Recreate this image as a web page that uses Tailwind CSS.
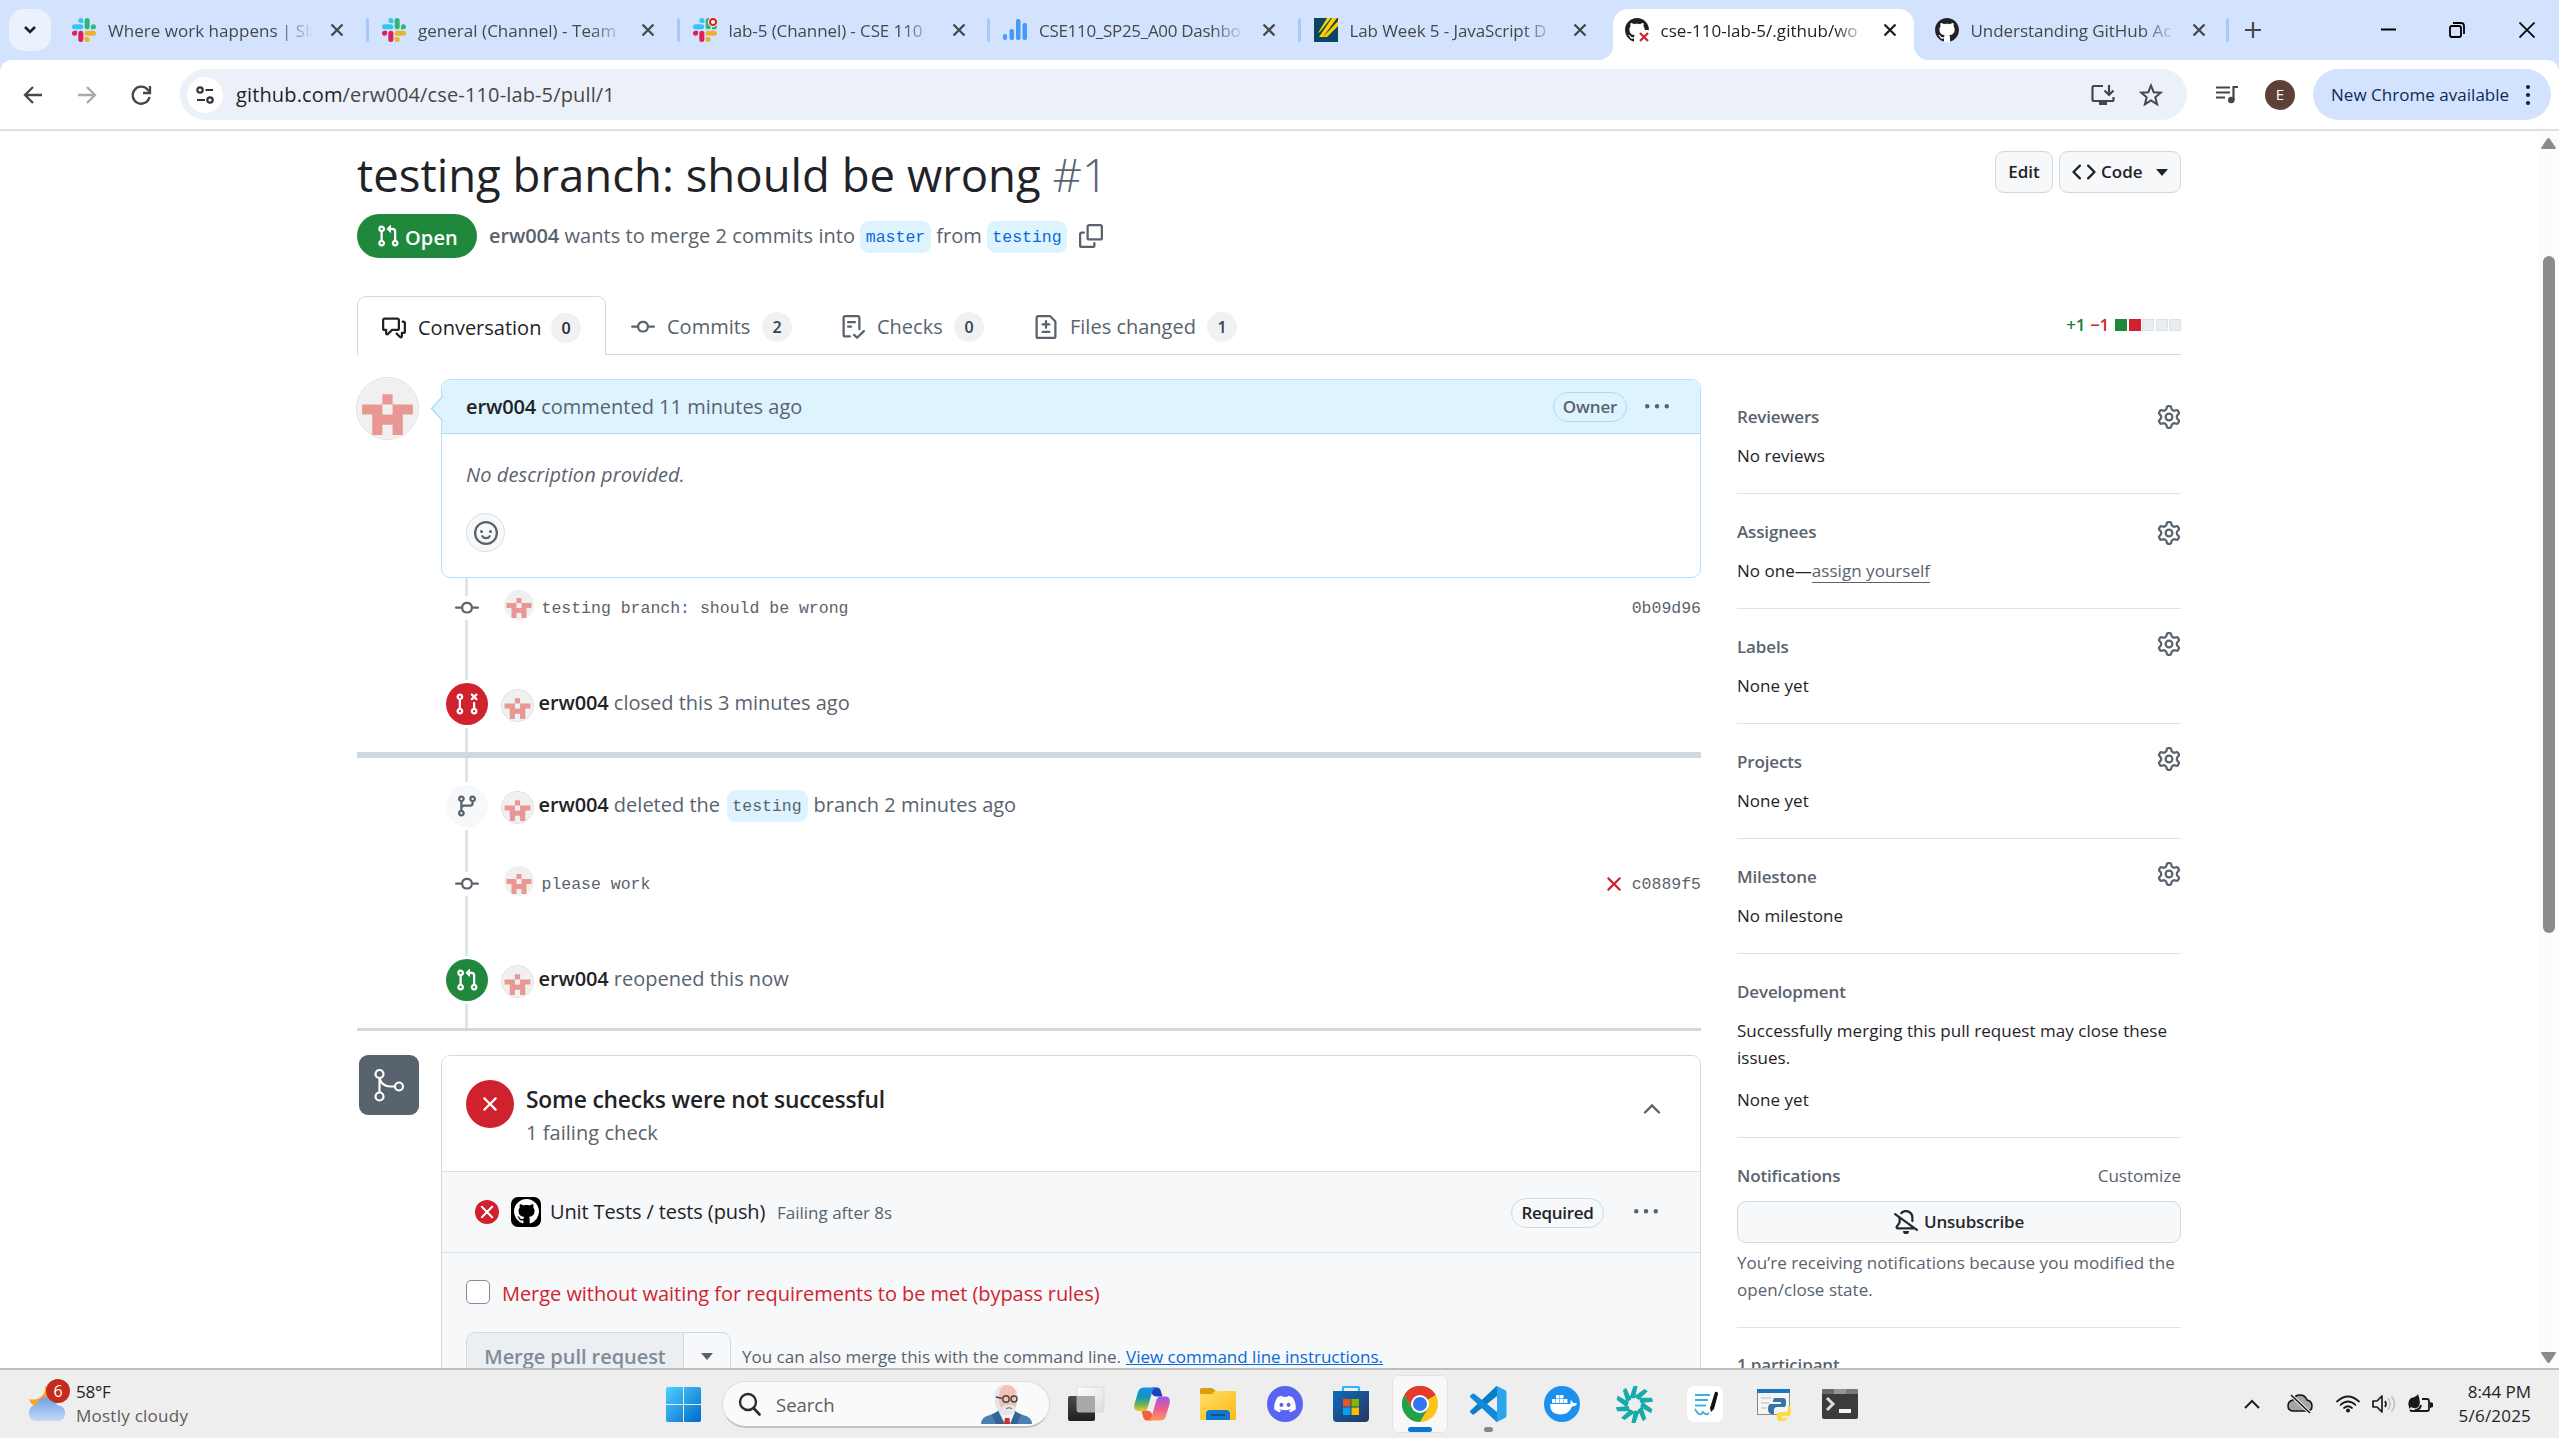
<!DOCTYPE html>
<html lang="en">
<head>
<meta charset="utf-8">
<title>testing branch: should be wrong #1</title>
<script src="https://cdn.jsdelivr.net/npm/@tailwindcss/browser@4"></script>
</head>
<body class="w-[2559px] h-[1438px] overflow-hidden bg-[#d3e3fd] font-['Open_Sans','Noto_Sans',sans-serif] text-[#1f2328] flex flex-col">

<svg class="hidden">
  <symbol id="slack" viewBox="0 0 24 24">
    <path fill="#E01E5A" d="M5.042 15.165a2.528 2.528 0 0 1-2.52 2.523A2.528 2.528 0 0 1 0 15.165a2.527 2.527 0 0 1 2.522-2.52h2.52v2.52zM6.313 15.165a2.527 2.527 0 0 1 2.521-2.52 2.527 2.527 0 0 1 2.521 2.52v6.313A2.528 2.528 0 0 1 8.834 24a2.528 2.528 0 0 1-2.521-2.522v-6.313z"/>
    <path fill="#36C5F0" d="M8.834 5.042a2.528 2.528 0 0 1-2.521-2.52A2.528 2.528 0 0 1 8.834 0a2.528 2.528 0 0 1 2.521 2.522v2.52H8.834zM8.834 6.313a2.528 2.528 0 0 1 2.521 2.521 2.528 2.528 0 0 1-2.521 2.521H2.522A2.528 2.528 0 0 1 0 8.834a2.528 2.528 0 0 1 2.522-2.521h6.312z"/>
    <path fill="#2EB67D" d="M18.956 8.834a2.528 2.528 0 0 1 2.522-2.521A2.528 2.528 0 0 1 24 8.834a2.528 2.528 0 0 1-2.522 2.521h-2.522V8.834zM17.688 8.834a2.528 2.528 0 0 1-2.523 2.521 2.527 2.527 0 0 1-2.52-2.521V2.522A2.527 2.527 0 0 1 15.165 0a2.528 2.528 0 0 1 2.523 2.522v6.312z"/>
    <path fill="#ECB22E" d="M15.165 18.956a2.528 2.528 0 0 1 2.523 2.522A2.528 2.528 0 0 1 15.165 24a2.527 2.527 0 0 1-2.52-2.522v-2.522h2.52zM15.165 17.688a2.527 2.527 0 0 1-2.52-2.523 2.526 2.526 0 0 1 2.52-2.52h6.313A2.527 2.527 0 0 1 24 15.165a2.528 2.528 0 0 1-2.522 2.523h-6.313z"/>
  </symbol>
  <symbol id="close" viewBox="0 0 16 16"><path d="M2.500 2.500l11 11M13.500 2.500l-11 11" stroke="currentColor" stroke-width="2.300" fill="none"/></symbol>
  <symbol id="github" viewBox="0 0 16 16"><path fill="currentColor" d="M8 0c4.42 0 8 3.58 8 8a8.013 8.013 0 0 1-5.45 7.59c-.4.08-.55-.17-.55-.38 0-.27.01-1.13.01-2.2 0-.75-.25-1.23-.54-1.48 1.78-.2 3.65-.88 3.65-3.95 0-.88-.31-1.59-.82-2.15.08-.2.36-1.02-.08-2.12 0 0-.67-.22-2.2.82-.64-.18-1.32-.27-2-.27-.68 0-1.36.09-2 .27-1.53-1.03-2.2-.82-2.2-.82-.44 1.1-.16 1.92-.08 2.12-.51.56-.82 1.28-.82 2.15 0 3.06 1.86 3.75 3.64 3.95-.23.2-.44.55-.51 1.07-.46.21-1.61.55-2.33-.66-.15-.24-.6-.83-1.23-.82-.67.01-.27.38.01.53.34.19.73.9.82 1.13.16.45.68 1.31 2.69.94 0 .67.01 1.3.01 1.49 0 .21-.15.45-.55.38A7.995 7.995 0 0 1 0 8c0-4.42 3.58-8 8-8Z"/></symbol>
  <symbol id="pr" viewBox="0 0 16 16"><path fill="currentColor" d="M1.5 3.25a2.25 2.25 0 1 1 3 2.122v5.256a2.251 2.251 0 1 1-1.5 0V5.372A2.25 2.25 0 0 1 1.5 3.25Zm5.677-.177L9.573.677A.25.25 0 0 1 10 .854V2.5h1A2.5 2.5 0 0 1 13.5 5v5.628a2.251 2.251 0 1 1-1.5 0V5a1 1 0 0 0-1-1h-1v1.646a.25.25 0 0 1-.427.177L7.177 3.427a.25.25 0 0 1 0-.354ZM3.75 2.5a.75.75 0 1 0 0 1.5.75.75 0 0 0 0-1.5Zm0 9.5a.75.75 0 1 0 0 1.5.75.75 0 0 0 0-1.5Zm8.25.75a.75.75 0 1 0 1.5 0 .75.75 0 0 0-1.5 0Z"/></symbol>
  <symbol id="pr-closed" viewBox="0 0 16 16"><path fill="currentColor" d="M3.25 1A2.25 2.25 0 0 1 4 5.372v5.256a2.251 2.251 0 1 1-1.5 0V5.372A2.251 2.251 0 0 1 3.25 1Zm9.5 5.5a.75.75 0 0 1 .75.75v3.378a2.251 2.251 0 1 1-1.5 0V7.25a.75.75 0 0 1 .75-.75Zm-2.03-5.273a.75.75 0 0 1 1.06 0l.97.97.97-.97a.748.748 0 0 1 1.265.332.75.75 0 0 1-.205.729l-.97.97.97.97a.751.751 0 0 1-.018 1.042.751.751 0 0 1-1.042.018l-.97-.97-.97.97a.749.749 0 0 1-1.275-.326.749.749 0 0 1 .215-.734l.97-.97-.97-.97a.75.75 0 0 1 0-1.06ZM2.5 3.25a.75.75 0 1 0 1.5 0 .75.75 0 0 0-1.5 0ZM3.25 12a.75.75 0 1 0 0 1.5.75.75 0 0 0 0-1.5Zm9.5 0a.75.75 0 1 0 0 1.5.75.75 0 0 0 0-1.5Z"/></symbol>
  <symbol id="branch" viewBox="0 0 16 16"><path fill="currentColor" d="M9.5 3.25a2.25 2.25 0 1 1 3 2.122V6A2.5 2.5 0 0 1 10 8.5H6a1 1 0 0 0-1 1v1.128a2.251 2.251 0 1 1-1.5 0V5.372a2.25 2.25 0 1 1 1.5 0v1.836A2.493 2.493 0 0 1 6 7h4a1 1 0 0 0 1-1v-.628A2.25 2.25 0 0 1 9.5 3.25Zm-6 0a.75.75 0 1 0 1.5 0 .75.75 0 0 0-1.5 0Zm8.25-.75a.75.75 0 1 0 0 1.5.75.75 0 0 0 0-1.5ZM4.25 12a.75.75 0 1 0 0 1.5.75.75 0 0 0 0-1.5Z"/></symbol>
  <symbol id="commit" viewBox="0 0 16 16"><path fill="currentColor" d="M11.93 8.5a4.002 4.002 0 0 1-7.86 0H.75a.75.75 0 0 1 0-1.5h3.32a4.002 4.002 0 0 1 7.86 0h3.32a.75.75 0 0 1 0 1.5Zm-1.43-.75a2.5 2.5 0 1 0-5 0 2.5 2.5 0 0 0 5 0Z"/></symbol>
  <symbol id="copy" viewBox="0 0 16 16"><path fill="currentColor" d="M0 6.75C0 5.784.784 5 1.75 5h1.5a.75.75 0 0 1 0 1.5h-1.5a.25.25 0 0 0-.25.25v7.5c0 .138.112.25.25.25h7.5a.25.25 0 0 0 .25-.25v-1.5a.75.75 0 0 1 1.5 0v1.5A1.75 1.75 0 0 1 9.25 16h-7.5A1.75 1.75 0 0 1 0 14.25Z"/><path fill="currentColor" d="M5 1.75C5 .784 5.784 0 6.75 0h7.5C15.216 0 16 .784 16 1.75v7.5A1.75 1.75 0 0 1 14.25 11h-7.5A1.75 1.75 0 0 1 5 9.25Zm1.75-.25a.25.25 0 0 0-.25.25v7.5c0 .138.112.25.25.25h7.5a.25.25 0 0 0 .25-.25v-7.5a.25.25 0 0 0-.25-.25Z"/></symbol>
  <symbol id="discussion" viewBox="0 0 16 16"><path fill="currentColor" d="M1.75 1h8.5c.966 0 1.75.784 1.75 1.75v5.5A1.75 1.75 0 0 1 10.25 10H7.061l-2.574 2.573A1.458 1.458 0 0 1 2 11.543V10h-.25A1.75 1.75 0 0 1 0 8.25v-5.5C0 1.784.784 1 1.75 1ZM1.5 2.75v5.5c0 .138.112.25.25.25h1a.75.75 0 0 1 .75.75v2.19l2.72-2.72a.749.749 0 0 1 .53-.22h3.5a.25.25 0 0 0 .25-.25v-5.5a.25.25 0 0 0-.25-.25h-8.5a.25.25 0 0 0-.25.25Zm13 2a.25.25 0 0 0-.25-.25h-.5a.75.75 0 0 1 0-1.5h.5c.966 0 1.75.784 1.75 1.75v5.5A1.75 1.75 0 0 1 14.25 12H14v1.543a1.458 1.458 0 0 1-2.487 1.03L9.22 12.28a.749.749 0 0 1 .326-1.275.749.749 0 0 1 .734.215l2.22 2.22v-2.19a.75.75 0 0 1 .75-.75h1a.25.25 0 0 0 .25-.25Z"/></symbol>
  <symbol id="checklist" viewBox="0 0 16 16"><path fill="currentColor" d="M2.5 1.75v11.5c0 .138.112.25.25.25h3.17a.75.75 0 0 1 0 1.5H2.75A1.75 1.75 0 0 1 1 13.25V1.75C1 .784 1.784 0 2.75 0h8.5C12.216 0 13 .784 13 1.75v7.736a.75.75 0 0 1-1.5 0V1.75a.25.25 0 0 0-.25-.25h-8.5a.25.25 0 0 0-.25.25Zm13.274 9.537v-.001l-4.557 4.45a.75.75 0 0 1-1.055-.008l-1.943-1.95a.75.75 0 0 1 1.062-1.058l1.419 1.425 4.026-3.932a.75.75 0 1 1 1.048 1.074ZM4.75 4h4.5a.75.75 0 0 1 0 1.5h-4.5a.75.75 0 0 1 0-1.5ZM4 7.75A.75.75 0 0 1 4.75 7h2a.75.75 0 0 1 0 1.5h-2A.75.75 0 0 1 4 7.75Z"/></symbol>
  <symbol id="filediff" viewBox="0 0 16 16"><path fill="currentColor" d="M1 1.75C1 .784 1.784 0 2.75 0h7.586c.464 0 .909.184 1.237.513l2.914 2.914c.329.328.513.773.513 1.237v9.586A1.75 1.75 0 0 1 13.25 16H2.75A1.75 1.75 0 0 1 1 14.25Zm1.75-.25a.25.25 0 0 0-.25.25v12.5c0 .138.112.25.25.25h10.5a.25.25 0 0 0 .25-.25V4.664a.25.25 0 0 0-.073-.177l-2.914-2.914a.25.25 0 0 0-.177-.073ZM8 3.25a.75.75 0 0 1 .75.75v1.5h1.5a.75.75 0 0 1 0 1.5h-1.5v1.5a.75.75 0 0 1-1.5 0V7h-1.5a.75.75 0 0 1 0-1.5h1.5V4A.75.75 0 0 1 8 3.25Zm-3 8a.75.75 0 0 1 .75-.75h4.5a.75.75 0 0 1 0 1.5h-4.5a.75.75 0 0 1-.75-.75Z"/></symbol>
  <symbol id="gear" viewBox="0 0 16 16"><path fill="currentColor" d="M8 0a8.2 8.2 0 0 1 .701.031C9.444.095 9.99.645 10.16 1.29l.288 1.107c.018.066.079.158.212.224.231.114.454.243.668.386.123.082.233.09.299.071l1.103-.303c.644-.176 1.392.021 1.82.63.27.385.506.792.704 1.218.315.675.111 1.422-.364 1.891l-.814.806c-.049.048-.098.147-.088.294.016.257.016.515 0 .772-.01.147.038.246.088.294l.814.806c.475.469.679 1.216.364 1.891a7.977 7.977 0 0 1-.704 1.217c-.428.61-1.176.807-1.82.63l-1.102-.302c-.067-.019-.177-.011-.3.071a5.909 5.909 0 0 1-.668.386c-.133.066-.194.158-.211.224l-.29 1.106c-.168.646-.715 1.196-1.458 1.26a8.006 8.006 0 0 1-1.402 0c-.743-.064-1.289-.614-1.458-1.26l-.289-1.106c-.018-.066-.079-.158-.212-.224a5.738 5.738 0 0 1-.668-.386c-.123-.082-.233-.09-.299-.071l-1.103.303c-.644.176-1.392-.021-1.82-.63a8.12 8.12 0 0 1-.704-1.218c-.315-.675-.111-1.422.363-1.891l.815-.806c.05-.048.098-.147.088-.294a6.214 6.214 0 0 1 0-.772c.01-.147-.038-.246-.088-.294l-.815-.806C.635 6.045.431 5.298.746 4.623a7.92 7.92 0 0 1 .704-1.217c.428-.61 1.176-.807 1.82-.63l1.102.302c.067.019.177.011.3-.071.214-.143.437-.272.668-.386.133-.066.194-.158.211-.224l.29-1.106C6.009.645 6.556.095 7.299.03 7.53.01 7.764 0 8 0Zm-.571 1.525c-.036.003-.108.036-.137.146l-.289 1.105c-.147.561-.549.967-.998 1.189-.173.086-.34.183-.5.29-.417.278-.97.423-1.529.27l-1.103-.303c-.109-.03-.175.016-.195.045-.22.312-.412.644-.573.99-.014.031-.021.11.059.19l.815.806c.411.406.562.957.53 1.456a4.709 4.709 0 0 0 0 .582c.032.499-.119 1.05-.53 1.456l-.815.806c-.081.08-.073.159-.059.19.162.346.353.677.573.989.02.03.085.076.195.046l1.102-.303c.56-.153 1.113-.008 1.53.27.161.107.328.204.501.29.447.222.85.629.997 1.189l.289 1.105c.029.109.101.143.137.146a6.6 6.6 0 0 0 1.142 0c.036-.003.108-.036.137-.146l.289-1.105c.147-.561.549-.967.998-1.189.173-.086.34-.183.5-.29.417-.278.97-.423 1.529-.27l1.103.303c.109.029.175-.016.195-.045.22-.313.411-.644.573-.99.014-.031.021-.11-.059-.19l-.815-.806c-.411-.406-.562-.957-.53-1.456a4.709 4.709 0 0 0 0-.582c-.032-.499.119-1.05.53-1.456l.815-.806c.081-.08.073-.159.059-.19a6.464 6.464 0 0 0-.573-.989c-.02-.03-.085-.076-.195-.046l-1.102.303c-.56.153-1.113.008-1.53-.27a4.44 4.44 0 0 0-.501-.29c-.447-.222-.85-.629-.997-1.189l-.289-1.105c-.029-.11-.101-.143-.137-.146a6.6 6.6 0 0 0-1.142 0ZM11 8a3 3 0 1 1-6 0 3 3 0 0 1 6 0ZM9.5 8a1.5 1.5 0 1 0-3.001.001A1.5 1.5 0 0 0 9.5 8Z"/></symbol>
  <symbol id="smiley" viewBox="0 0 16 16"><path fill="currentColor" d="M8 0a8 8 0 1 1 0 16A8 8 0 0 1 8 0ZM1.5 8a6.5 6.5 0 1 0 13 0 6.5 6.5 0 0 0-13 0Z"/><circle cx="5" cy="7" r="1" fill="currentColor"/><circle cx="11" cy="7" r="1" fill="currentColor"/><path d="M5.600 10.200C6.700 11.800 9.300 11.800 10.400 10.200" stroke="currentColor" stroke-width="1.500" stroke-linecap="round" fill="none"/></symbol>
  <symbol id="bell-slash" viewBox="0 0 16 16"><path fill="currentColor" d="m4.182 4.31.016.011 10.104 7.316.013.01 1.375.996a.75.75 0 1 1-.88 1.214L13.626 13H2.518a1.516 1.516 0 0 1-1.263-2.36l1.703-2.554A.255.255 0 0 0 3 7.947V5.305L.31 3.357a.75.75 0 1 1 .88-1.214Zm7.373 7.19L4.5 6.391v1.556c0 .346-.102.683-.294.97l-1.703 2.556a.017.017 0 0 0-.003.01c0 .005.002.009.005.012l.006.004.007.001ZM8 1.500c-.997 0-1.895.416-2.534 1.086A.75.75 0 1 1 4.380 1.550 5 5 0 0 1 13 5v2.373a.75.75 0 0 1-1.500 0V5A3.500 3.500 0 0 0 8 1.500ZM8 16a2 2 0 0 1-1.985-1.750c-.017-.137.097-.25.235-.25h3.500c.138 0 .252.113.235.25A2 2 0 0 1 8 16Z"/></symbol>
  <symbol id="code" viewBox="0 0 16 16"><path fill="currentColor" d="m11.28 3.22 4.25 4.25a.75.75 0 0 1 0 1.06l-4.25 4.25a.749.749 0 0 1-1.275-.326.749.749 0 0 1 .215-.734L13.940 8l-3.720-3.720a.749.749 0 0 1 .326-1.275.749.749 0 0 1 .734.215Zm-6.560 0a.751.751 0 0 1 1.042.018.751.751 0 0 1 .018 1.042L2.060 8l3.720 3.720a.749.749 0 0 1-.326 1.275.749.749 0 0 1-.734-.215L.470 8.530a.75.75 0 0 1 0-1.060Z"/></symbol>
  <symbol id="x" viewBox="0 0 16 16"><path fill="currentColor" d="M3.72 3.72a.75.75 0 0 1 1.06 0L8 6.94l3.22-3.22a.749.749 0 0 1 1.275.326.749.749 0 0 1-.215.734L9.06 8l3.22 3.22a.749.749 0 0 1-.326 1.275.749.749 0 0 1-.734-.215L8 9.06l-3.22 3.22a.751.751 0 0 1-1.042-.018.751.751 0 0 1-.018-1.042L6.94 8 3.72 4.78a.75.75 0 0 1 0-1.06Z"/></symbol>
  <symbol id="dots" viewBox="0 0 16 16"><path fill="currentColor" d="M8 9a1.500 1.500 0 1 0 0-3 1.500 1.500 0 0 0 0 3ZM1.500 9a1.500 1.500 0 1 0 0-3 1.500 1.500 0 0 0 0 3Zm13 0a1.500 1.500 0 1 0 0-3 1.500 1.500 0 0 0 0 3Z"/></symbol>
  <symbol id="identicon" viewBox="0 0 12 12"><rect width="12" height="12" fill="#f0f0f0"/><path fill="#e89793" d="M5 3.200h2v2h4v2H9v4H7v-2H5v2H3v-4H1v-2h4z"/><rect x="5" y="5.200" width="2" height="2" fill="#f0f0f0"/></symbol>
</svg>

<!-- Tab strip -->
<div class="h-[60px] shrink-0 flex items-start pt-[9px] text-[17px] tracking-[0.030px] text-[#45494d]">
  <div class="ml-[9px] w-[42px] h-[42px] rounded-[15px] bg-[#ebf2fe] flex items-center justify-center"><svg class="w-[14px] h-[10px] text-[#1f1f1f]" viewBox="0 0 14 10"><path d="M2 2l5 5 5-5" fill="none" stroke="currentColor" stroke-width="2.600"/></svg></div>
  <div class="w-[315px] h-[42px] flex items-center pl-[21px]">
    <svg class="w-6 h-6 shrink-0"><use href="#slack"/></svg>
    <div class="ml-3 w-[206px] pt-[2px] whitespace-nowrap [mask-image:linear-gradient(90deg,#000_82%,transparent)]">Where work happens | Sla</div>
    <svg class="w-4 h-4 ml-[15px] shrink-0"><use href="#close"/></svg>
  </div>
  <div class="w-[310.500px] h-[42px] flex items-center"><div class="w-[3px] h-6 bg-[#a8c7fa] rounded"></div>
    <svg class="w-6 h-6 ml-[13px] shrink-0"><use href="#slack"/></svg>
    <div class="ml-3 w-[206px] pt-[2px] whitespace-nowrap [mask-image:linear-gradient(90deg,#000_84%,transparent)]">general (Channel) - Team</div>
    <svg class="w-4 h-4 ml-[16px] shrink-0"><use href="#close"/></svg>
  </div>
  <div class="w-[310.500px] h-[42px] flex items-center"><div class="w-[3px] h-6 bg-[#a8c7fa] rounded"></div>
    <svg class="w-6 h-6 ml-[13px] shrink-0" viewBox="0 0 24 24"><use href="#slack"/><circle cx="20" cy="4" r="5" fill="#fff"/><circle cx="20" cy="4" r="3" fill="none" stroke="#e01e1e" stroke-width="2"/></svg>
    <div class="ml-3 w-[206px] pt-[2px] whitespace-nowrap tracking-[-0.100px] [mask-image:linear-gradient(90deg,#000_84%,transparent)]">lab-5 (Channel) - CSE 110</div>
    <svg class="w-4 h-4 ml-[16px] shrink-0"><use href="#close"/></svg>
  </div>
  <div class="w-[310.500px] h-[42px] flex items-center"><div class="w-[3px] h-6 bg-[#a8c7fa] rounded"></div>
    <svg class="w-6 h-6 ml-[13px] shrink-0" viewBox="0 0 24 24" fill="#4599f7"><rect y="16" width="4" height="6" rx="2"/><rect x="6.500" y="11" width="4.500" height="11" rx="2"/><rect x="13" y="1" width="4.500" height="21" rx="2"/><rect x="19.500" y="5" width="4.500" height="17" rx="2"/></svg>
    <div class="ml-3 w-[206px] pt-[2px] whitespace-nowrap tracking-[-0.300px] [mask-image:linear-gradient(90deg,#000_84%,transparent)]">CSE110_SP25_A00 Dashbo</div>
    <svg class="w-4 h-4 ml-[16px] shrink-0"><use href="#close"/></svg>
  </div>
  <div class="w-[315px] h-[42px] flex items-center"><div class="w-[3px] h-6 bg-[#a8c7fa] rounded"></div>
    <svg class="w-6 h-6 ml-[13px] shrink-0" viewBox="0 0 24 24"><rect width="24" height="24" fill="#0b4561"/><path d="M13 0h4L6 14l-2 1zM18 0h5L9 19H5zM24 3v5L13 19H9z" fill="#ffcd00"/></svg>
    <div class="ml-3 w-[206px] pt-[2px] whitespace-nowrap tracking-[-0.100px] [mask-image:linear-gradient(90deg,#000_84%,transparent)]">Lab Week 5 - JavaScript D</div>
    <svg class="w-4 h-4 ml-[16px] shrink-0"><use href="#close"/></svg>
  </div>
  <div class="relative w-[301px] h-[51px] bg-white rounded-t-[15px] flex items-center pb-[9px] pl-[12px] text-[#1f1f1f]">
    <div class="absolute bottom-0 -left-[15px] w-[15px] h-[15px] bg-[radial-gradient(circle_at_0_0,#d3e3fd_15px,#fff_15.500px)]"></div>
    <div class="absolute bottom-0 -right-[15px] w-[15px] h-[15px] bg-[radial-gradient(circle_at_100%_0,#d3e3fd_15px,#fff_15.500px)]"></div>
    <svg class="w-6 h-6 shrink-0" viewBox="0 0 24 24"><use href="#github" width="24" height="24"/><rect x="13" y="12" width="12" height="12" fill="#fff"/><path d="M15 15l8 8M23 15l-8 8" stroke="#cf222e" stroke-width="2.200"/></svg>
    <div class="ml-3 w-[206px] pt-[2px] whitespace-nowrap [mask-image:linear-gradient(90deg,#000_84%,transparent)]">cse-110-lab-5/.github/wo</div>
    <svg class="w-4 h-4 ml-[15px] shrink-0"><use href="#close"/></svg>
  </div>
  <div class="w-[312px] h-[42px] flex items-center pl-[21px]">
    <div class="w-6 h-6 rounded-full bg-white shrink-0"><svg class="w-6 h-6 text-[#1f2328]"><use href="#github"/></svg></div>
    <div class="ml-3 w-[206px] pt-[2px] whitespace-nowrap tracking-[-0.050px] [mask-image:linear-gradient(90deg,#000_84%,transparent)]">Understanding GitHub Ac</div>
    <svg class="w-4 h-4 ml-[14px] shrink-0"><use href="#close"/></svg>
  </div>
  <div class="h-[42px] flex items-center flex-1 text-[#1f1f1f]">
    <div class="w-[3px] h-6 bg-[#a8c7fa] rounded"></div>
    <svg class="w-4 h-4 ml-[16px]" viewBox="0 0 16 16"><path d="M8 0v16M0 8h16" stroke="#474747" stroke-width="2.200"/></svg>
    <svg class="w-[15px] h-4 ml-[120px]" viewBox="0 0 15 16"><path d="M0 7.500h15" stroke="#000" stroke-width="2"/></svg>
    <svg class="w-4 h-4 ml-[53px]" viewBox="0 0 16 16"><path d="M1 6q0-2 2-2h7q2 0 2 2v7q0 2-2 2H3q-2 0-2-2zM4 1h8q3 0 3 3v8" fill="none" stroke="#000" stroke-width="1.800"/></svg>
    <svg class="w-4 h-4 ml-[54px]" viewBox="0 0 16 16"><path d="M.5.5l15 15M15.500.5l-15 15" stroke="#000" stroke-width="1.700"/></svg>
  </div>
</div>

<!-- Toolbar -->
<div class="h-[71px] shrink-0 bg-white rounded-t-[12px] border-b-2 border-[#dfdfdf] flex items-center text-[#474747]">
  <svg class="w-6 h-6 ml-[21px]" viewBox="0 0 24 24"><path d="M21 12H4M12 4l-8 8 8 8" fill="none" stroke="currentColor" stroke-width="2.300"/></svg>
  <svg class="w-6 h-6 ml-[30px] text-[#a9a9a9]" viewBox="0 0 24 24"><path d="M3 12h17M12 4l8 8-8 8" fill="none" stroke="currentColor" stroke-width="2.300"/></svg>
  <svg class="w-6 h-6 ml-[30px]" viewBox="0 0 24 24"><path d="M20.500 14a8.500 8.500 0 1 1-2-7.500l2 2" fill="none" stroke="currentColor" stroke-width="2.300"/><path d="M21 3v7h-7" fill="none" stroke="currentColor" stroke-width="2.300"/></svg>
  <div class="ml-[27px] w-[2007px] h-[51px] rounded-full bg-[#ecf0f9] flex items-center">
    <div class="ml-[7px] w-9 h-9 rounded-full bg-white flex items-center justify-center"><svg class="w-5 h-5 text-[#303236]" viewBox="0 0 20 20"><g fill="none" stroke="currentColor" stroke-width="2.200"><circle cx="5" cy="5" r="2.700"/><circle cx="15" cy="15" r="2.700"/><path d="M10.500 5H18M2 15h8"/></g></svg></div>
    <div class="ml-[13px] text-[20px] text-[#1f1f1f] whitespace-nowrap tracking-[0.140px]">github.com<span class="text-[#474747]">/erw004/cse-110-lab-5/pull/1</span></div>
    <svg class="ml-auto w-6 h-6" viewBox="0 0 24 24"><path d="M12 3H3q-1.500 0-1.500 1.500v12Q1.500 18 3 18h18q1.500 0 1.500-1.500V14M18 2v9M13.500 7.500L18 12l4.500-4.500" fill="none" stroke="currentColor" stroke-width="2.200"/><path d="M8 18h8v4H8z" fill="currentColor"/></svg>
    <svg class="ml-6 mr-[24px] w-6 h-6" viewBox="0 0 24 24"><path d="M12 2.500l2.700 6.700 7 .5-5.400 4.600 1.800 7L12 17.500l-6.100 3.800 1.800-7-5.400-4.600 7-.5z" fill="none" stroke="currentColor" stroke-width="2"/></svg>
  </div>
  <svg class="ml-[28px] w-6 h-6" viewBox="0 0 24 24"><path d="M1 4.500h14M1 9.500h14M1 14.500h9M18.500 17V4H23" fill="none" stroke="currentColor" stroke-width="2.200"/><circle cx="16.300" cy="17" r="3.300" fill="currentColor"/></svg>
  <div class="ml-[26px] w-[30px] h-[30px] rounded-full bg-[#5d4037] text-white text-[15px] flex items-center justify-center">E</div>
  <div class="ml-[18px] w-[238px] h-[51px] rounded-full bg-[#d3e3fd] text-[#0b2a57] text-[17px] flex items-center pl-[18px] tracking-[0.030px] whitespace-nowrap">New Chrome available
    <svg class="ml-auto mr-[21px] w-1 h-6" viewBox="0 0 4 24" fill="#041e49"><circle cx="2" cy="4" r="2"/><circle cx="2" cy="12" r="2"/><circle cx="2" cy="20" r="2"/></svg>
  </div>
</div>

<!-- Page viewport -->
<div class="h-[1237px] shrink-0 bg-white overflow-hidden flex">
<main class="ml-[357px] w-[1824px] shrink-0">
  <div class="h-[83px] pt-5 flex items-start">
    <h1 class="text-[45.500px] leading-[48px] -mt-[1px] whitespace-nowrap">testing branch: should be wrong <span class="font-light text-[#59636e]">#1</span></h1>
    <div class="ml-auto h-[42px] w-[58px] rounded-[9px] border border-[#d1d9e0] bg-[#f6f8fa] text-[17px] font-semibold flex items-center justify-center">Edit</div>
    <div class="ml-[6px] h-[42px] w-[122px] rounded-[9px] border border-[#d1d9e0] bg-[#f6f8fa] text-[17px] font-semibold flex items-center pl-[12px] whitespace-nowrap"><svg class="w-6 h-6 mr-[5px]"><use href="#code"/></svg>Code<svg class="w-3 h-[7px] ml-auto mr-[12px]" viewBox="0 0 12 7"><path d="M0 0h12L6 7z" fill="#1f2328"/></svg></div>
  </div>
  <div class="h-11 flex items-center text-[20px] text-[#59636e] whitespace-nowrap tracking-[0.060px]">
    <div class="w-[120px] h-11 rounded-full bg-[#1f883d] text-white font-semibold flex items-center pl-[19px] tracking-[-0.300px]"><svg class="w-6 h-6 mr-[5px]"><use href="#pr"/></svg><span class="pt-[3px] tracking-[0.100px]">Open</span></div>
    <div class="ml-[12px] w-[371px]"><span class="font-semibold tracking-[-0.100px]">erw004</span> wants to merge 2 commits into</div>
    <div class="h-8 w-[71px] mt-[2px] pt-[2px] rounded-[9px] bg-[#ddf4ff] text-[#0969da] text-[16.500px] tracking-normal font-['Liberation_Mono',monospace] flex items-center justify-center">master</div>
    <div class="w-[56px] text-center">from</div>
    <div class="h-8 w-[80px] mt-[2px] pt-[2px] rounded-[9px] bg-[#ddf4ff] text-[#0969da] text-[16.500px] tracking-normal font-['Liberation_Mono',monospace] flex items-center justify-center">testing</div>
    <svg class="w-6 h-6 ml-[12px]"><use href="#copy"/></svg>
  </div>
  <!-- PR navigation -->
  <div class="mt-[38px] h-[59px] flex text-[20px] text-[#59636e] whitespace-nowrap">
    <div class="w-[249px] border border-b-0 border-[#d1d9e0] rounded-t-[9px] text-[#1f2328] flex items-center pl-6 pt-[3px] bg-white"><svg class="w-6 h-6"><use href="#discussion"/></svg><div class="ml-3 w-[121px]">Conversation</div><div class="ml-3 w-[30px] h-[30px] rounded-full bg-[#eff1f3] text-[16px] font-semibold text-[#25292e] flex items-center justify-center">0</div></div>
    <div class="flex-1 border-b-[1.500px] border-[#d1d9e0] flex items-center pt-[4px]">
      <svg class="w-6 h-6 ml-[25px]"><use href="#commit"/></svg><div class="ml-3 w-[83px]">Commits</div><div class="ml-3 w-[30px] h-[30px] rounded-full bg-[#eff1f3] text-[16px] font-semibold text-[#3a4047] flex items-center justify-center">2</div>
      <svg class="w-6 h-6 ml-[49px]"><use href="#checklist"/></svg><div class="ml-3 w-[65px]">Checks</div><div class="ml-3 w-[30px] h-[30px] rounded-full bg-[#eff1f3] text-[16px] font-semibold text-[#3a4047] flex items-center justify-center">0</div>
      <svg class="w-6 h-6 ml-[50px]"><use href="#filediff"/></svg><div class="ml-3 w-[125px]">Files changed</div><div class="ml-3 w-[30px] h-[30px] rounded-full bg-[#eff1f3] text-[16px] font-semibold text-[#3a4047] flex items-center justify-center">1</div>
      <div class="ml-auto flex items-center text-[17px] font-semibold pb-[5px] tracking-[-0.300px]"><span class="text-[#1a7f37]">+1</span><span class="text-[#d1242f] ml-[5px] mr-[6px]">−1</span>
        <div class="flex gap-[1.500px]"><div class="w-3 h-3 bg-[#1f883d]"></div><div class="w-3 h-3 bg-[#cf222e]"></div><div class="w-3 h-3 bg-[#e9edf0] border border-[#dde1e5]"></div><div class="w-3 h-3 bg-[#e9edf0] border border-[#dde1e5]"></div><div class="w-3 h-3 bg-[#e9edf0] border border-[#dde1e5]"></div></div>
      </div>
    </div>
  </div>

  <div class="flex">
    <!-- Discussion column -->
    <div class="w-[1344px] shrink-0 pt-6">
      <div class="flex h-[199px]">
        <svg class="w-[63px] h-[63px] -mt-[2px] -ml-[1px] rounded-full border-[1.500px] border-[#dcdcdc]"><use href="#identicon"/></svg>
        <div class="relative ml-[22px] flex-1 border-[1.500px] border-[#b8dfff] rounded-[9px]">
          <svg class="absolute -left-[12px] top-[15px] w-[13px] h-[27px]" viewBox="0 0 13 27"><path d="M13 1L1.500 13.500 13 26" fill="#ddf4ff" stroke="#b0dbff" stroke-width="1.500"/></svg>
          <div class="h-[54px] bg-[#ddf4ff] border-b-[1.500px] border-[#a9dafb] rounded-t-[8px] flex items-center pl-6 pr-[31px] text-[20px] text-[#59636e] pt-[1px]"><span class="font-semibold text-[#1f2328] tracking-[-0.100px] mr-[5px]">erw004</span> commented 11 minutes ago
            <div class="ml-auto w-[74px] h-[30px] border-[1.500px] border-[#a9dafb] rounded-full text-[17px] font-semibold tracking-[-0.100px] flex items-center justify-center">Owner</div>
            <svg class="ml-[18px] w-6 h-6"><use href="#dots"/></svg>
          </div>
          <div class="pl-6 pt-[26px] text-[20px] leading-[30px] italic text-[#59636e] tracking-[0.080px]">No description provided.</div>
          <div class="ml-6 mt-[23px] w-[39px] h-[39px] rounded-full border border-[#d9dfe5] bg-[#f6f8fa] flex items-center justify-center text-[#59636e]"><svg class="w-6 h-6"><use href="#smiley"/></svg></div>
        </div>
      </div>

      <div class="ml-[108px] border-l-[3px] border-[#e0e5e9] h-[174px] pt-[18px] whitespace-nowrap text-[20px] text-[#59636e]">
        <div class="h-6 flex items-center text-[16.500px] font-['Liberation_Mono',monospace]">
          <div class="w-6 h-6 -ml-[13.500px] bg-white"><svg class="w-6 h-6"><use href="#commit"/></svg></div>
          <svg class="ml-[25px] -mt-[6px] w-[30px] h-[30px] rounded-full"><use href="#identicon"/></svg><div class="ml-[8px] pt-[3px]">testing branch: should be wrong</div><div class="ml-auto pt-[3px]">0b09d96</div>
        </div>
        <div class="mt-[60px] h-12 flex items-center">
          <div class="w-12 h-12 -ml-[25.500px] bg-white p-[3px]"><div class="w-[42px] h-[42px] rounded-full bg-[#cf222e] text-white flex items-center justify-center"><svg class="w-6 h-6"><use href="#pr-closed"/></svg></div></div>
          <svg class="ml-[10px] mt-[2px] w-[33px] h-[33px] rounded-full border-[1.500px] border-[#d8d8d8]"><use href="#identicon"/></svg><div class="ml-[5px] -mt-[2px]"><span class="font-semibold text-[#1f2328] tracking-[-0.100px]">erw004</span> closed this 3 minutes ago</div>
        </div>
      </div>
      <div class="h-[6px] bg-[#d1d9e0]"></div>
      <div class="ml-[108px] border-l-[3px] border-[#e0e5e9] h-[270px] pt-6 whitespace-nowrap text-[20px] text-[#59636e]">
        <div class="h-12 flex items-center">
          <div class="w-12 h-12 -ml-[25.500px] bg-white p-[3px]"><div class="w-[42px] h-[42px] rounded-full bg-[#f6f8fa] flex items-center justify-center"><svg class="w-6 h-6"><use href="#branch"/></svg></div></div>
          <svg class="ml-[10px] mt-[2px] w-[33px] h-[33px] rounded-full border-[1.500px] border-[#d8d8d8]"><use href="#identicon"/></svg><div class="ml-[5px] -mt-[2px] w-[188px]"><span class="font-semibold text-[#1f2328] tracking-[-0.100px]">erw004</span> deleted the</div>
          <div class="h-8 w-[81px] pt-[2px] rounded-[9px] bg-[#ddf4ff] text-[16.500px] tracking-normal font-['Liberation_Mono',monospace] flex items-center justify-center">testing</div><div class="ml-[6px] -mt-[2px]">branch 2 minutes ago</div>
        </div>
        <div class="mt-[42px] h-6 flex items-center text-[16.500px] font-['Liberation_Mono',monospace]">
          <div class="w-6 h-6 -ml-[13.500px] bg-white"><svg class="w-6 h-6"><use href="#commit"/></svg></div>
          <svg class="ml-[25px] -mt-[6px] w-[30px] h-[30px] rounded-full"><use href="#identicon"/></svg><div class="ml-[8px] pt-[3px]">please work</div><svg class="ml-auto mr-[6px] w-6 h-6 text-[#d1242f]"><use href="#x"/></svg><div class="pt-[3px]">c0889f5</div>
        </div>
        <div class="mt-[60px] h-12 flex items-center">
          <div class="w-12 h-12 -ml-[25.500px] bg-white p-[3px]"><div class="w-[42px] h-[42px] rounded-full bg-[#1f883d] text-white flex items-center justify-center"><svg class="w-6 h-6"><use href="#pr"/></svg></div></div>
          <svg class="ml-[10px] mt-[2px] w-[33px] h-[33px] rounded-full border-[1.500px] border-[#d8d8d8]"><use href="#identicon"/></svg><div class="ml-[5px] -mt-[2px]"><span class="font-semibold text-[#1f2328] tracking-[-0.100px]">erw004</span> reopened this now</div>
        </div>
      </div>
      <div class="h-[3px] bg-[#d1d9e0]"></div>

      <!-- Merge box -->
      <div class="mt-6 flex">
        <div class="ml-[2px] w-[60px] h-[60px] rounded-[9px] bg-[#59636e]"><svg class="w-[60px] h-[60px]" viewBox="0 0 60 60" fill="none" stroke="#fff" stroke-width="2.200"><circle cx="20.500" cy="19" r="4"/><circle cx="20.500" cy="41.500" r="4"/><circle cx="40" cy="31.500" r="4"/><path d="M20.500 23v14.500M20.500 23q2 8.500 11 8.500h4.500"/></svg></div>
        <div class="ml-[22px] flex-1 h-[400px] border-[1.500px] border-[#d1d9e0] rounded-[9px] bg-[#f6f8fa] whitespace-nowrap">
          <div class="h-[116px] bg-white rounded-t-[8px] border-b-[1.500px] border-[#d9dfe4] flex pl-6 pt-[24px]">
            <div class="w-12 h-12 rounded-full bg-[#cf222e] text-white flex items-center justify-center"><svg class="w-6 h-6"><use href="#x"/></svg></div>
            <div class="ml-3"><div class="text-[22.800px] leading-[36px] font-semibold tracking-[-0.170px] mt-[2px]">Some checks were not successful</div><div class="text-[20px] leading-[28px] text-[#59636e] tracking-[0.050px] pt-[1px]">1 failing check</div></div>
            <svg class="ml-auto mr-[39px] mt-[23px] w-[18px] h-[11px]" viewBox="0 0 18 11"><path d="M2 9.500l7-7 7 7" fill="none" stroke="#59636e" stroke-width="2.300" stroke-linecap="round"/></svg>
          </div>
          <div class="h-[81px] border-b-[1.500px] border-[#d9dfe4] flex items-center pl-[33px] pb-[1px]">
            <div class="w-6 h-6 rounded-full bg-[#cf222e] text-white flex items-center justify-center"><svg class="w-[22px] h-[22px]"><use href="#x"/></svg></div>
            <div class="ml-[12px] w-[30px] h-[30px] rounded-[7px] bg-black text-white flex items-center justify-center"><svg class="w-[25px] h-[25px]"><use href="#github"/></svg></div>
            <div class="ml-[9px] w-[227px] text-[20px] tracking-[-0.120px]">Unit Tests / tests (push)</div><div class="text-[17px] text-[#59636e] tracking-normal pt-[3px]">Failing after 8s</div>
            <div class="ml-auto w-[93px] h-[30px] mt-[2px] border-[1.500px] border-[#d1d9e0] rounded-full text-[17px] font-semibold tracking-[-0.300px] flex items-center justify-center">Required</div>
            <svg class="ml-[30px] mr-[42px] w-6 h-6 text-[#59636e]"><use href="#dots"/></svg>
          </div>
          <div class="flex items-center pl-6 mt-[26px] h-[26px]">
            <div class="w-6 h-6 rounded-[5px] border-[1.500px] border-[#818b98] bg-white"></div><div class="ml-3 text-[20px] text-[#d1242f] tracking-[-0.050px] pt-[3px]">Merge without waiting for requirements to be met (bypass rules)</div>
          </div>
          <div class="flex items-center pl-6 mt-[27px] h-12">
            <div class="flex w-[265px] h-12 border-[1.500px] border-[#d1d9e0] rounded-[9px] overflow-hidden">
              <div class="w-[217px] pt-[2px] bg-[#ebeff2] border-r-[1.500px] border-[#d1d9e0] text-[#818b98] text-[20px] font-semibold tracking-[-0.050px] flex items-center justify-center">Merge pull request</div>
              <div class="flex-1 flex items-center justify-center"><svg class="w-3 h-[7px]" viewBox="0 0 12 7"><path d="M0 0h12L6 7z" fill="#59636e"/></svg></div>
            </div>
            <div class="ml-[11px] w-[384px] text-[17px] text-[#59636e] tracking-[0.010px] pt-[2px]">You can also merge this with the command line.</div><a class="text-[17px] text-[#0969da] underline tracking-normal pt-[2px]">View command line instructions.</a>
          </div>
        </div>
      </div>
    </div>

    <!-- Sidebar -->
    <aside class="ml-9 w-[444px] shrink-0 text-[17px] leading-[27px] tracking-[0.030px] text-[#1f2328]">
      <div class="h-[139px] border-b-[1.500px] border-[#dde2e7] pt-[47.500px]"><div class="flex items-center justify-between h-[27px] font-semibold tracking-[-0.150px] text-[#59636e]">Reviewers<svg class="w-6 h-6 mt-[2px]"><use href="#gear"/></svg></div><div class="mt-3">No reviews</div></div>
      <div class="h-[115px] border-b-[1.500px] border-[#dde2e7] pt-[23.500px]"><div class="flex items-center justify-between h-[27px] font-semibold tracking-[-0.150px] text-[#59636e]">Assignees<svg class="w-6 h-6 mt-[3px]"><use href="#gear"/></svg></div><div class="mt-3 flex">No one—<span class="text-[#59636e] border-b-[1.500px] border-[#59636e] h-[26px]">assign yourself</span></div></div>
      <div class="h-[115px] border-b-[1.500px] border-[#dde2e7] pt-[23.500px]"><div class="flex items-center justify-between h-[27px] font-semibold tracking-[-0.150px] text-[#59636e]">Labels<svg class="w-6 h-6 -mt-[4px]"><use href="#gear"/></svg></div><div class="mt-3">None yet</div></div>
      <div class="h-[115px] border-b-[1.500px] border-[#dde2e7] pt-[23.500px]"><div class="flex items-center justify-between h-[27px] font-semibold tracking-[-0.150px] text-[#59636e]">Projects<svg class="w-6 h-6 -mt-[4px]"><use href="#gear"/></svg></div><div class="mt-3">None yet</div></div>
      <div class="h-[115px] border-b-[1.500px] border-[#dde2e7] pt-[23.500px]"><div class="flex items-center justify-between h-[27px] font-semibold tracking-[-0.150px] text-[#59636e]">Milestone<svg class="w-6 h-6 -mt-[4px]"><use href="#gear"/></svg></div><div class="mt-3">No milestone</div></div>
      <div class="h-[184px] border-b-[1.500px] border-[#dde2e7] pt-[23.500px] whitespace-nowrap"><div class="font-semibold tracking-[-0.150px] text-[#59636e]">Development</div><div class="mt-3">Successfully merging this pull request may close these<br>issues.</div><div class="mt-[15px]">None yet</div></div>
      <div class="h-[190px] border-b-[1.500px] border-[#dde2e7] pt-[23.500px] text-[#59636e] whitespace-nowrap"><div class="flex justify-between"><span class="font-semibold tracking-[-0.150px]">Notifications</span><span>Customize</span></div>
        <div class="mt-[12px] h-[42px] border border-[#d1d9e0] rounded-[9px] bg-[#f6f8fa] text-[#25292e] font-semibold tracking-[-0.200px] flex items-center justify-center gap-[6px]"><svg class="w-6 h-6"><use href="#bell-slash"/></svg>Unsubscribe</div>
        <div class="mt-[6px]">You’re receiving notifications because you modified the<br>open/close state.</div></div>
      <div class="pt-[23px] font-semibold tracking-[-0.150px] text-[#59636e]">1 participant</div>
    </aside>
  </div>
</main>
<!-- Scrollbar -->
<div class="ml-auto w-[21px] bg-[#fcfcfc] flex flex-col items-center">
  <svg class="mt-[7px] w-[15px] h-[11px]" viewBox="0 0 15 11"><path d="M7.500 0q1 0 1.500 1l6 9q0 1-1 1H1q-1 0-1-1l6-9q.5-1 1.500-1z" fill="#8b8b8b"/></svg>
  <div class="mt-[107px] w-[12px] h-[677px] rounded-full bg-[#8b8b8b]"></div>
  <svg class="mt-auto mb-[5px] w-[15px] h-[11px]" viewBox="0 0 15 11"><path d="M7.500 11q1 0 1.500-1l6-9q0-1-1-1H1Q0 0 0 1l6 9q.5 1 1.500 1z" fill="#8b8b8b"/></svg>
</div>
</div>

<!-- Taskbar -->
<div class="h-[70px] shrink-0 bg-[#eeeeee] border-t-2 border-[#bdbdbd] flex items-center text-[17px] whitespace-nowrap">
  <div class="flex items-center w-[666px] pl-[28px]">
    <svg class="w-[44px] h-[48px] -mt-[2px]" viewBox="0 0 44 48"><defs><linearGradient id="cl" x2="0" y2="1"><stop stop-color="#6f9fe8"/><stop offset="1" stop-color="#c5d8f8"/></linearGradient></defs><path d="M17 7q1 10-8 13-4 1-8 0 3 9 13 9 11-1 12-12-1-7-9-10z" fill="#f5a623"/><path d="M9 42q-8 0-8-8t8-8q2-8 10-8 8 0 10 8 8 1 8 8 0 8-8 8z" fill="url(#cl)"/><circle cx="30" cy="12" r="12" fill="#c42b1c"/><text x="30" y="17.500" text-anchor="middle" font-size="16" fill="#fff" font-family="Open Sans">6</text></svg>
    <div class="ml-[4px] leading-[24px] text-[17px]"><div class="tracking-[-0.200px]">58°F</div><div class="text-[#5c5c5c] tracking-[0.250px]">Mostly cloudy</div></div>
  </div>
  <svg class="w-[35px] h-[35px]" viewBox="0 0 35 35"><defs><linearGradient id="wn" x2="1" y2="1"><stop stop-color="#4fd0ff"/><stop offset="1" stop-color="#0069c9"/></linearGradient></defs><path d="M2 0h15v17H0V2q0-2 2-2zM18 0h15q2 0 2 2v15H18zM0 18h17v17H2q-2 0-2-2zM18 18h17v15q0 2-2 2H18z" fill="url(#wn)"/></svg>
  <div class="ml-[21px] w-[328px] h-[47px] rounded-full bg-[#fafafa] border-[1.500px] border-b-[2px] border-[#dedede] border-b-[#c4c4c4] flex items-center pl-[15px] text-[18.500px] text-[#5d5d5d]">
    <svg class="w-6 h-6" viewBox="0 0 24 24"><circle cx="10" cy="10" r="8" fill="none" stroke="#2a2a2a" stroke-width="2.300"/><path d="M15.500 16l6 6.500" stroke="#2a2a2a" stroke-width="2.600" stroke-linecap="round"/></svg>
    <div class="ml-[14px] pt-[2px]">Search</div>
    <svg class="ml-auto mr-[17px] mt-[2px] w-[51px] h-[39px]" viewBox="0 0 51 39"><path d="M0 39q0-7 9-9l9-4h15l9 4q9 2 9 9z" fill="#4a80b5"/><path d="M11 30l6-4 6 13h-8zM40 30l-6-4-5 13h7z" fill="#356394"/><path d="M18 27l6 12h5l5-12z" fill="#f3f3f5"/><path d="M24 33h4.500l.5 6h-6z" fill="#c5342c"/><path d="M14 13Q14 0 25 0t11 13q0 8-3 13-3 4-8 4t-8-5q-3-5-3-12z" fill="#efc3b1"/><path d="M15 17q-3-8 0-12 3-5 9-5-6 3-6 12 0 8 2 11 4-4 9-3 5 0 6 3-1 7-8 7-8 0-10-6-2-3-2-7zM35 4q3 5 1 14l-2-5z" fill="#e4e6ee"/><path d="M25 23.500q3-1.500 6 0" stroke="#a04f42" stroke-width="1" fill="none"/><g fill="none" stroke="#4c4140" stroke-width="1.400"><circle cx="25" cy="14" r="3.200"/><circle cx="33" cy="14" r="3"/><path d="M15 12l6.500 1.500"/></g></svg>
  </div>
  <svg class="ml-[18px] w-[37px] h-[36px]" viewBox="0 0 37 36"><defs><linearGradient id="tv" x2="0" y2="1"><stop stop-color="#4b4b4b"/><stop offset="1" stop-color="#1f1f1f"/></linearGradient><linearGradient id="tw" x2="1" y2="1"><stop stop-color="#fdfdfd"/><stop offset="1" stop-color="#dedede"/></linearGradient></defs><rect x="0" y="10" width="27" height="25" rx="2" fill="url(#tv)"/><rect x="9" y="1" width="27" height="25" rx="2" fill="url(#tw)" stroke="#d2d2d2" stroke-width=".7"/><path d="M9 10h18v16H11q-2 0-2-2z" fill="#a9a9a9"/></svg>
  <svg class="ml-[29px] w-[36px] h-[36px]" viewBox="0 0 36 36"><defs><linearGradient id="cp1" x2="0" y2="1"><stop stop-color="#1590e6"/><stop offset=".4" stop-color="#1694c0"/><stop offset=".7" stop-color="#5fb45b"/><stop offset="1" stop-color="#eec72b"/></linearGradient><linearGradient id="cp2" x2="0" y2="1"><stop stop-color="#9b59e8"/><stop offset=".5" stop-color="#ee5a92"/><stop offset="1" stop-color="#fb9a5c"/></linearGradient></defs><path d="M18 1.500h5q3 0 4 4l1.500 5h-6q-3 0-5-3z" fill="#1b43bf"/><path d="M18 34.500h-5q-3 0-4-4l-1.500-6H13q3 0 5 3z" fill="#f0603a"/><path d="M10 1.500h12q-3 1-4 5l-4 14q-1 4.500-5 4.500H4.500Q-1 25 .5 18L4 6q1.500-4.500 6-4.500z" fill="url(#cp1)"/><path d="M26 34.500H14q3-1 4-5l4-14q1-5 5-5h4.500Q37 10.500 35.500 18L32 30q-1.500 4.500-6 4.500z" fill="url(#cp2)"/></svg>
  <svg class="ml-[30px] w-[36px] h-[36px]" viewBox="0 0 36 36"><defs><linearGradient id="fx" x2="1" y2="1"><stop stop-color="#ffdf6b"/><stop offset="1" stop-color="#fbb913"/></linearGradient></defs><path d="M0 3.500Q0 2 1.500 2H12l4 3v4H0z" fill="#dc9c0c"/><path d="M0 8h12l3-3h20q1 0 1 1v27q0 1-1 1H1q-1 0-1-1z" fill="url(#fx)"/><path d="M6 34v-6q0-4 4-4h16q4 0 4 4v6z" fill="#1379cc"/><path d="M11 29h14" stroke="#0a4a86" stroke-width="1.500"/></svg>
  <svg class="ml-[31px] w-[36px] h-[36px]" viewBox="0 0 36 36"><circle cx="18" cy="18" r="18" fill="#5865f2"/><g transform="translate(7.200 7.200) scale(.9)"><path fill="#fff" d="M20.317 4.37a19.791 19.791 0 0 0-4.885-1.515.074.074 0 0 0-.079.037c-.21.375-.444.864-.608 1.25a18.27 18.27 0 0 0-5.487 0 12.64 12.64 0 0 0-.617-1.25.077.077 0 0 0-.079-.037A19.736 19.736 0 0 0 3.677 4.37a.07.07 0 0 0-.032.027C.533 9.046-.32 13.58.099 18.057a.082.082 0 0 0 .031.057 19.9 19.9 0 0 0 5.993 3.03.078.078 0 0 0 .084-.028 14.09 14.09 0 0 0 1.226-1.994.076.076 0 0 0-.041-.106 13.107 13.107 0 0 1-1.872-.892.077.077 0 0 1-.008-.128 10.2 10.2 0 0 0 .372-.292.074.074 0 0 1 .077-.01c3.928 1.793 8.18 1.793 12.062 0a.074.074 0 0 1 .078.01c.12.098.246.198.373.292a.077.077 0 0 1-.006.127 12.299 12.299 0 0 1-1.873.892.077.077 0 0 0-.041.107c.36.698.772 1.362 1.225 1.993a.076.076 0 0 0 .084.028 19.839 19.839 0 0 0 6.002-3.03.077.077 0 0 0 .032-.054c.5-5.177-.838-9.674-3.549-13.66a.061.061 0 0 0-.031-.03zM8.02 15.33c-1.183 0-2.157-1.085-2.157-2.419 0-1.333.956-2.419 2.157-2.419 1.21 0 2.176 1.096 2.157 2.42 0 1.333-.956 2.418-2.157 2.418zm7.975 0c-1.183 0-2.157-1.085-2.157-2.419 0-1.333.955-2.419 2.157-2.419 1.21 0 2.176 1.096 2.157 2.42 0 1.333-.946 2.418-2.157 2.418z"/></g></svg>
  <svg class="ml-[30px] w-[36px] h-[36px]" viewBox="0 0 36 36"><defs><linearGradient id="st" x2="1" y2="1"><stop stop-color="#0f6cbd"/><stop offset="1" stop-color="#26365e"/></linearGradient></defs><path d="M10 6V2q0-1 1-1h14q1 0 1 1v4" fill="none" stroke="#2fb7f0" stroke-width="2.200"/><path d="M0 5h36v27q0 4-4 4H4q-4 0-4-4z" fill="url(#st)"/><path fill="#f25022" d="M10 13h7.500v7.500H10z"/><path fill="#7fba00" d="M18.500 13H26v7.500h-7.500z"/><path fill="#00a4ef" d="M10 21.500h7.500V29H10z"/><path fill="#ffb900" d="M18.500 21.500H26V29h-7.500z"/></svg>
  <div class="ml-[23px] w-[56px] h-[58px] rounded-[6px] bg-[#f8f8f8] border border-[#e3e3e3] flex flex-col items-center pt-[10px] justify-between">
    <svg class="w-[36px] h-[36px] shrink-0" viewBox="0 0 36 36"><circle cx="18" cy="18" r="18" fill="#fcc419"/><path d="M18 18L2.400 9A18 18 0 0 1 33.600 9z" fill="#e33b2e"/><path d="M18 9h15.600A18 18 0 0 0 2.400 9l8 13.500z" fill="#e33b2e"/><path d="M2.400 9A18 18 0 0 0 18 36l7.800-13.500-7.800 4-7.800-4z" fill="#22a04b"/><circle cx="18" cy="18" r="9" fill="#fff"/><circle cx="18" cy="18" r="7" fill="#3076ee"/></svg>
    <div class="w-6 h-[5px] rounded-full bg-[#0a76d4]"></div>
  </div>
  <div class="ml-[22px] h-[58px] w-[37px] flex flex-col items-center justify-between pt-[11px] pb-[1px]">
    <svg class="w-[37px] h-[36px]" viewBox="0 0 37 36"><path d="M27 0l8 4q1.500 1 1.500 2.500v23q0 1.500-1.500 2.500l-8 4z" fill="#2ba4ee"/><path d="M27 0v10L4.500 28q-1.500 1-2.500 0l-1.500-1.500q-1-1 0-2L26 .5z" fill="#0b7cc6"/><path d="M27 36V26L4.500 8Q3 7 2 8L.5 9.500q-1 1 0 2L26 35.500z" fill="#128ad6"/></svg>
    <div class="w-[9px] h-[5px] rounded-full bg-[#868686]"></div>
  </div>
  <svg class="ml-[37px] w-[36px] h-[36px]" viewBox="0 0 36 36"><circle cx="18" cy="18" r="18" fill="#1d8fee"/><path d="M6 18h20q1-1 .5-4 2 1 2.500 3 2-.5 4 .5-1 3-5 3-3 8-12 8-10 0-10-10.500z" fill="#fff"/><path d="M8 13h3.500v4H8zM12 13h3.500v4H12zM16 13h3.500v4H16zM20 13h3.500v4H20zM12 9h3.500v3.500H12zM16 9h3.500v3.500H16z" fill="#fff"/></svg>
  <svg class="ml-[36px] w-[37px] h-[37px]" viewBox="0 0 36 36"><g fill="#17aaa9"><path d="M13 12L17 0h4l-2.500 12z"/><path transform="rotate(36 18 18)" d="M13 12L17 0h4l-2.500 12z"/><path transform="rotate(72 18 18)" d="M13 12L17 0h4l-2.500 12z"/><path transform="rotate(108 18 18)" d="M13 12L17 0h4l-2.500 12z"/><path transform="rotate(144 18 18)" d="M13 12L17 0h4l-2.500 12z"/><path transform="rotate(180 18 18)" d="M13 12L17 0h4l-2.500 12z"/><path transform="rotate(216 18 18)" d="M13 12L17 0h4l-2.500 12z"/><path transform="rotate(252 18 18)" d="M13 12L17 0h4l-2.500 12z"/><path transform="rotate(288 18 18)" d="M13 12L17 0h4l-2.500 12z"/><path transform="rotate(324 18 18)" d="M13 12L17 0h4l-2.500 12z"/></g></svg>
  <svg class="ml-[34px] w-[36px] h-[36px]" viewBox="0 0 36 36"><rect width="36" height="36" rx="7" fill="#fff"/><path d="M8 9h15M8 14h13M8 19.500h11" stroke="#3db2d6" stroke-width="1.800"/><path d="M8 23q5 9 8 3 3 4 6 1" fill="none" stroke="#3bb5c8" stroke-width="1.800"/><path d="M28 6q3-1 3 2l-4 15-3 3-1-4z" fill="#111"/></svg>
  <svg class="ml-[34px] w-[36px] h-[36px]" viewBox="0 0 36 36"><rect x=".5" y="3.500" width="32" height="25" fill="#f5f5f5" stroke="#8a8a8a"/><path d="M0 3h33v4H0z" fill="#1976bd"/><path d="M4 12h10M4 17h8M4 22h6" stroke="#b9b9b9"/><path d="M21 12h-4q-1 1-1 4h8v2H13q-2 1-2 5t3 5h3v-4q0-3 3-3h7q2 0 2-3v-3q0-3-3-3z" fill="#3572a5"/><path d="M26 35h-3q-3 0-3-3v-3q0-3 3-3h6q2 0 2-4v-3q3 1 3 6t-3 5h-6v2h5q0 3-4 3z" fill="#ffd845"/></svg>
  <svg class="ml-[29px] w-[36px] h-[30px]" viewBox="0 0 36 30"><rect width="36" height="30" rx="2" fill="#3b3b3b"/><path d="M0 2q0-2 2-2h10v5H0z" fill="#6a6a6a"/><path d="M12 0h12v5H12z" fill="#949494"/><path d="M24 0h10q2 0 2 2v3H24z" fill="#787878"/><path d="M5 9l6 6-6 6" fill="none" stroke="#ddd" stroke-width="3"/><path d="M17 20h12v4H17z" fill="#f3f3f3"/></svg>
  <!-- System tray -->
  <div class="ml-auto flex items-center">
    <svg class="w-[16px] h-[10px]" viewBox="0 0 16 10"><path d="M1 9l7-7 7 7" fill="none" stroke="#222" stroke-width="2"/></svg>
    <svg class="ml-[27px] w-[26px] h-[20px]" viewBox="0 0 26 20"><path d="M7 17q-6 0-6-5t5-6q2-5 7-5t7 5q5 1 5 6t-5 5z" fill="#a5a5a5" stroke="#111" stroke-width="1.500"/><path d="M4 1l19 18" stroke="#eee" stroke-width="3.500"/><path d="M4 1l19 18" stroke="#111" stroke-width="1.500"/></svg>
    <svg class="ml-[23px] w-[24px] h-[18px]" viewBox="0 0 24 18"><g fill="none" stroke="#1a1a1a" stroke-width="1.700" stroke-linecap="round"><path d="M1 6.500q11-10 22 0M4.500 10q7.500-7 15 0M8 13q4-3.500 8 0"/></g><circle cx="12" cy="15.500" r="2" fill="#1a1a1a"/></svg>
    <svg class="ml-[12px] w-[25px] h-[20px]" viewBox="0 0 25 20"><path d="M1 7h4l5-5v16l-5-5H1z" fill="none" stroke="#1a1a1a" stroke-width="1.700" stroke-linejoin="round"/><path d="M13 7q2 3 0 6" fill="none" stroke="#1a1a1a" stroke-width="1.700"/><path d="M16 4q4 6 0 12M19.500 2q6 8 0 16" fill="none" stroke="#c4c4c4" stroke-width="1.700"/></svg>
    <svg class="ml-[11px] w-[25px] h-[20px]" viewBox="0 0 25 20"><path d="M14 5h5q2 0 2 2v8q0 2-2 2H4q-1 0-2-1" fill="none" stroke="#1a1a1a" stroke-width="1.800"/><path d="M22 8l3 1v4l-3 1z" fill="#1a1a1a"/><path d="M10 0q3 8 1 12-3 4-8 1l-2 2v-2Q-1 7 3 4q5-1 7-4z" fill="#1a1a1a"/><path d="M7 16q5 0 6-5" fill="none" stroke="#1a1a1a" stroke-width="2"/></svg>
    <div class="ml-[19px] mr-[28px] w-[79px] leading-[24px] text-[17px] tracking-[0.200px] flex flex-col items-end"><div class="tracking-[-0.050px]">8:44 PM</div><div>5/6/2025</div></div>
  </div>
</div>
</body>
</html>
